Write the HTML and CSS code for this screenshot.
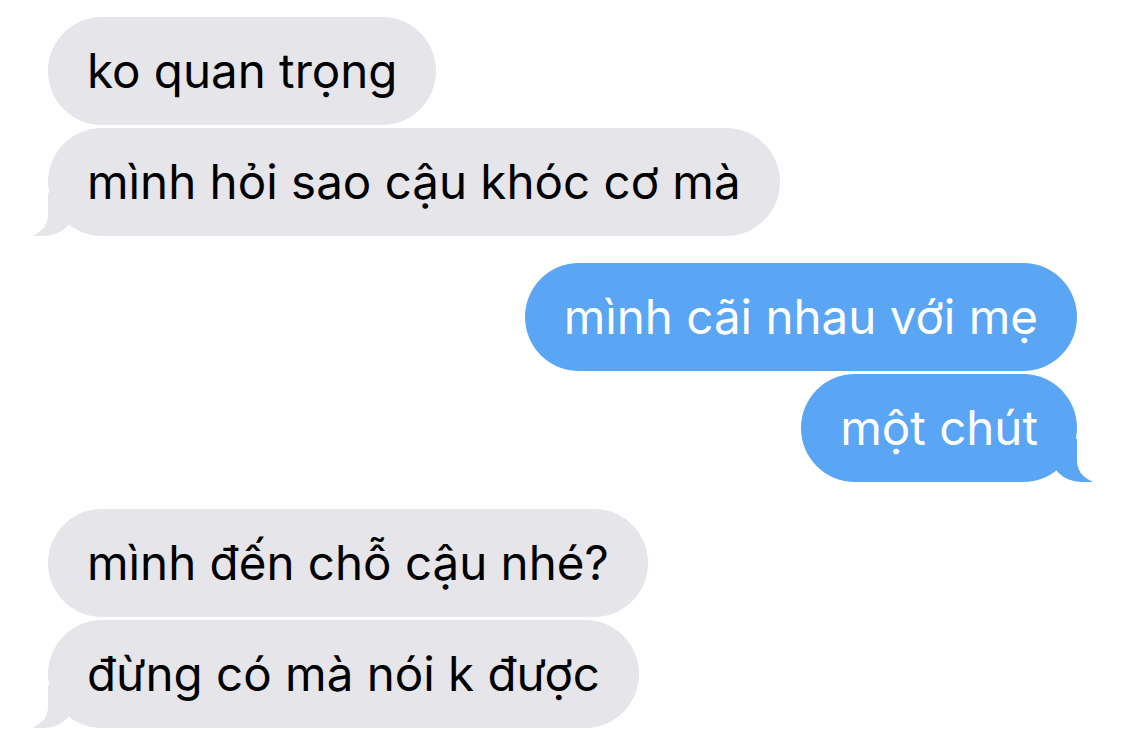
FILE: index.html
```html
<!DOCTYPE html>
<html lang="vi">

<head>
    <meta charset="UTF-8">
    <meta name="viewport" content="width=device-width, initial-scale=1.0">
    <title>Tin nhắn</title>
    <link rel="stylesheet" href="styles.css">
</head>

<body>
    <div class="chat">
        <!-- tin nhắn của bạn -->
        <div class="group">
            <div class="msg them">ko quan trọng</div>
            <div class="msg them tail">mình hỏi sao cậu khóc cơ mà</div>
        </div>

        <!-- tin nhắn của mình -->
        <div class="group">
            <div class="msg me">mình cãi nhau với mẹ</div>
            <div class="msg me tail">một chút</div>
        </div>

        <div class="group">
            <div class="msg them">mình đến chỗ cậu nhé?</div>
            <div class="msg them tail">đừng có mà nói k được</div>
        </div>
    </div>
</body>

</html>
```

FILE: styles.css
```css
/* iMessage bong bóng chat */
:root {
    --gray: #e5e5ea;
    --blue: #5ba5f5;
}

body {
    margin: 0;
    background: #fff;
    font-family: Inter, "Noto Sans", sans-serif;
}

.chat {
    display: flex;
    flex-direction: column;
    gap: 27px;
    padding: 17px 48px 0;
}

.group {
    display: flex;
    flex-direction: column;
    gap: 3px;
}

.msg {
    position: relative;
    font-size: 47.5px;
    line-height: 56px;
    padding: 26px 39px;
    border-radius: 54px;
    white-space: nowrap;
}

.them {
    align-self: flex-start;
    background: var(--gray);
    color: #000;
}

.me {
    align-self: flex-end;
    background: var(--blue);
    color: #fff;
}

/* đuôi bong bóng */
.tail::before,
.tail::after {
    content: "";
    position: absolute;
    bottom: 0;
    height: 43px;
}

.them.tail::before {
    left: -15px;
    width: 43px;
    background: var(--gray);
    border-bottom-right-radius: 32px;
}

.them.tail::after {
    left: -56px;
    width: 56px;
    background: #fff;
    border-bottom-right-radius: 21px;
}

.me.tail::before {
    right: -15px;
    width: 43px;
    background: var(--blue);
    border-bottom-left-radius: 32px;
}

.me.tail::after {
    right: -56px;
    width: 56px;
    background: #fff;
    border-bottom-left-radius: 21px;
}
```
